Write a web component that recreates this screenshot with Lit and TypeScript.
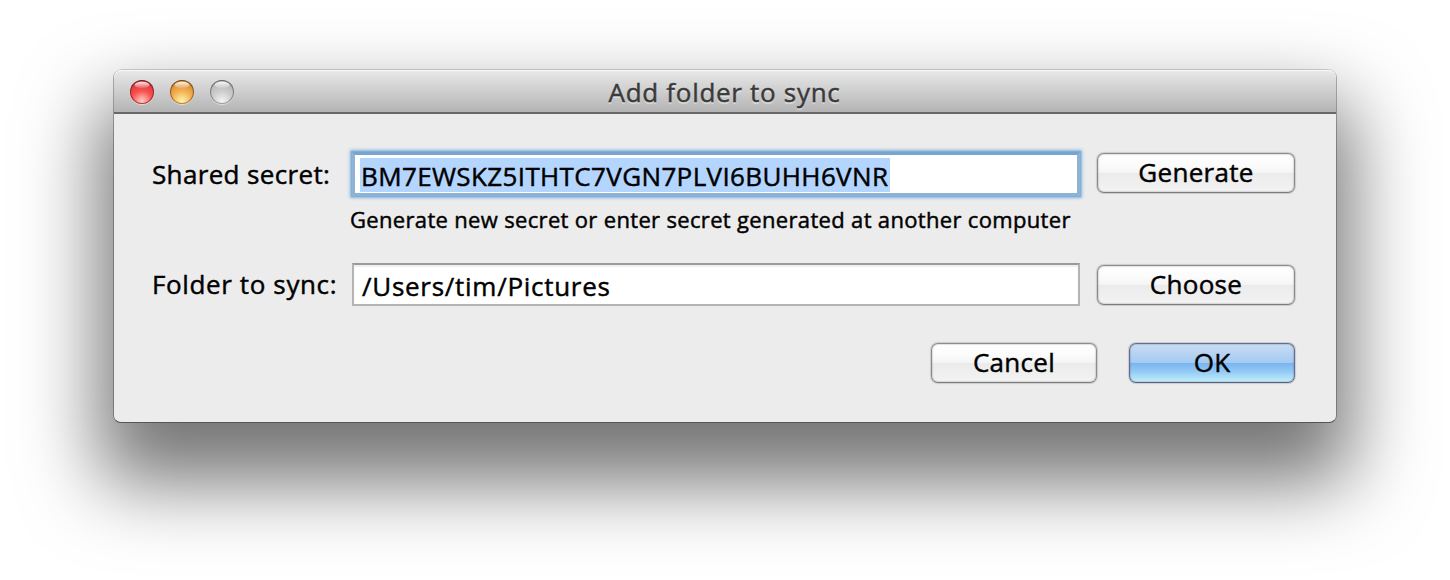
import { LitElement, html, css } from "lit";
import { customElement, state } from "lit/decorators.js";

@customElement("app-root")
export class AppRoot extends LitElement {
  @state() private secret = "BM7EWSKZ5ITHTC7VGN7PLVI6BUHH6VNR";
  @state() private folder = "/Users/tim/Pictures";

  static styles = css`
    :host { display: block; box-sizing: border-box; width: 1450px; height: 580px; padding: 69px 113px 0;
      overflow: hidden; background: #fff; color: #000; -webkit-text-stroke: .45px currentColor;
      font: 500 26px/36px "Open Sans", "Noto Sans", sans-serif; }
    * { box-sizing: border-box; }
    .window { width: 1224px; height: 354px; border: 1px solid rgba(0,0,0,.28); border-top-color: rgba(0,0,0,.16);
      border-bottom-color: #555; border-radius: 9px 9px 8px 8px; background: #ececec; background-clip: padding-box;
      box-shadow: 0 46px 78px 14px rgba(0,0,0,.54); }
    .bar { height: 44px; display: grid; grid-template-columns: 1fr auto 1fr; align-items: center;
      padding: 0 16px 0 15px; border-bottom: 2px solid #686868; border-radius: 8px 8px 0 0;
      background: linear-gradient(#f4f4f4 0, #e6e6e6 2px, #b4b4b4 100%); box-shadow: inset 0 1px #f6f6f6; }
    .lights { display: flex; gap: 14px; padding-top: 2px; }
    .light { width: 26px; height: 26px; display: block; }
    .title { color: #3a3a3a; text-shadow: 0 2px 1px rgba(255,255,255,.45); white-space: nowrap; padding-top: 2px; }
    .form { padding: 38px 41px 0 38px; display: grid; grid-template-columns: 198px 732px 1fr; }
    .label { white-space: nowrap; height: 43px; padding-top: 4px; }
    .label.second { padding-top: 3px; }
    .field { background: #fff; white-space: nowrap; }
    .focused { margin-left: 2px; width: 728px; height: 44px; padding: 3px 0 0 5px;
      border: 3px solid #8fb3d4; border-top-color: #78a5cf;
      box-shadow: 0 0 1px 1px #7fb0dc, 0 0 3px 2px rgba(118,169,216,.8); }
    .selected { display: inline-block; height: 34px; width: 530px; padding-left: 1px; line-height: 36px; background: #b4d5fe; }
    .plain { width: 728px; height: 43px; margin-left: 2px; border: 2px solid #b4b4b4; border-top-color: #9a9a9a;
      padding: 3px 0 0 8px; box-shadow: inset 0 2px 2px #eee; }
    .hint { grid-column: 2 / 4; font-size: 22px; line-height: 30px; white-space: nowrap; margin: 8px 0 29px; }
    .btn { display: block; width: 198px; height: 40px; padding: 0 0 2px; margin: 1px 0 0; font: inherit; line-height: 34px; color: #000;
      border: 1px solid #8c8c8c; border-bottom-color: #7c7c7c; border-radius: 7px; text-align: center;
      background: linear-gradient(#fff 0, #fbfbfb 30%, #f4f4f4 50%, #ebebeb 51%, #f3f3f3 100%);
      box-shadow: 0 0 1px 1px rgba(0,0,0,.14), inset 0 0 1px 1px rgba(0,0,0,.12); }
    .form .btn { margin-left: 15px; }
    .form .lower { margin-top: 2px; }
    .actions { display: flex; justify-content: flex-end; gap: 32px; padding: 37px 41px 0 0; }
    .actions .btn { width: 166px; margin-top: 0; }
    .actions .default { border-color: #666c91; border-bottom-color: #5b5f83;
      background: linear-gradient(#c9dcf4 0, #a5caf1 49%, #78b4f0 50%, #8fc7f4 70%, #c3effb 100%); }
    .t1 { letter-spacing: .7px; } .t2 { letter-spacing: .35px; } .t3 { letter-spacing: .37px; }
    .t4 { letter-spacing: .33px; } .t5 { letter-spacing: .62px; } .t6 { letter-spacing: .3px; } .t7 { letter-spacing: .72px; }
  `;

  private light(id: string, edge: string, top: string, mid: string, low: string) {
    return html`<svg class="light" viewBox="0 0 26 26">
      <defs>
        <linearGradient id="${id}-edge" x2="0" y2="1"><stop stop-color=${edge}/><stop offset="1" stop-color=${mid}/></linearGradient>
        <radialGradient id="${id}-fill" cx=".5" cy=".92" r=".85"><stop stop-color=${low}/><stop offset=".55" stop-color=${mid}/><stop offset="1" stop-color=${top}/></radialGradient>
        <linearGradient id="${id}-shine" x2="0" y2="1"><stop stop-color="#fff" stop-opacity=".9"/><stop offset="1" stop-color="#fff" stop-opacity=".1"/></linearGradient>
      </defs>
      <circle cx="13" cy="14" r="12" fill="#fff" opacity=".45"/>
      <circle cx="13" cy="13" r="12" fill="url(#${id}-edge)"/>
      <circle cx="13" cy="13" r="12" fill=${edge} opacity=".45"/>
      <circle cx="13" cy="13" r="10.9" fill="url(#${id}-fill)"/>
      <ellipse cx="13" cy="6" rx="7.5" ry="3.2" fill="url(#${id}-shine)"/>
    </svg>`;
  }

  render() {
    return html`<div class="window">
      <div class="bar">
        <div class="lights">
          ${this.light("close", "#701c20", "#d9383a", "#f9524f", "#ffd0ca")}
          ${this.light("minimize", "#764414", "#d68f32", "#f4b055", "#fff6a8")}
          ${this.light("zoom", "#656565", "#b8b8b8", "#cccccc", "#f4f4f4")}
        </div>
        <div class="title t1">Add folder to sync</div>
      </div>
      <div class="form">
        <div class="label t2">Shared secret:</div>
        <div class="field focused"><span class="selected t3">${this.secret}</span></div>
        <button class="btn t6">Generate</button>
        <div></div>
        <div class="hint"><span class="t4">Generate new secret or enter secret generated at another computer</span></div>
        <div class="label second"><span class="t5">Folder to sync:</span></div>
        <div class="field plain"><span class="t7">${this.folder}</span></div>
        <button class="btn lower t6">Choose</button>
      </div>
      <div class="actions">
        <button class="btn t6">Cancel</button>
        <button class="btn default t6">OK</button>
      </div>
    </div>`;
  }
}
